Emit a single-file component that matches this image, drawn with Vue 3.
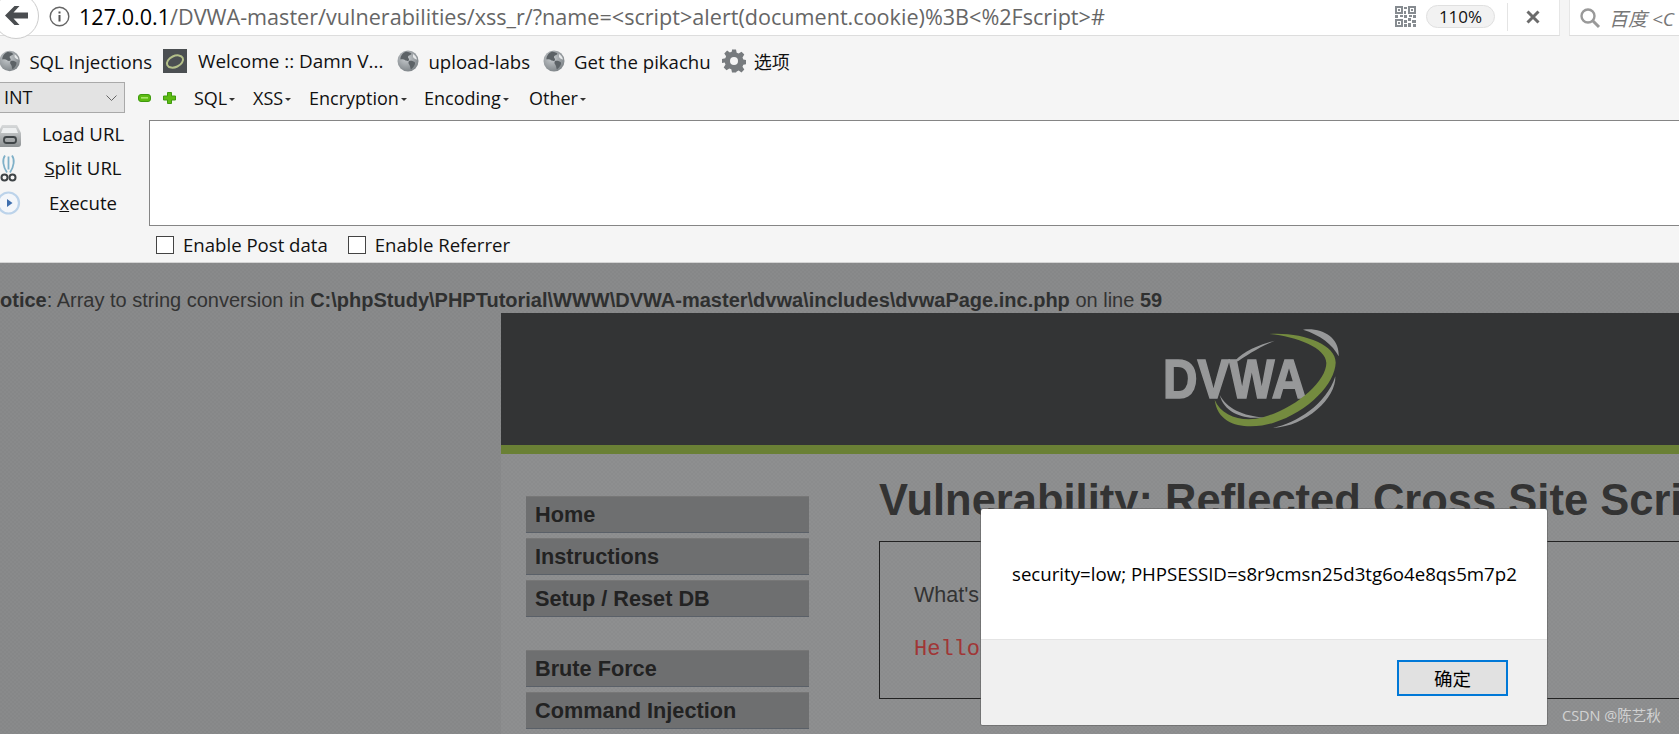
<template>
  <div class="screen">
    <svg class="defs" width="0" height="0">
      <defs>
        <radialGradient id="globeFill" cx="40%" cy="35%" r="70%">
          <stop offset="0" stop-color="#c9cdd0" />
          <stop offset="1" stop-color="#7c8286" />
        </radialGradient>
        <linearGradient id="drawerFill" x1="0" y1="0" x2="0" y2="1">
          <stop offset="0" stop-color="#d8dadb" />
          <stop offset="1" stop-color="#8d9193" />
        </linearGradient>
        <symbol id="globe" viewBox="0 0 22 22">
          <circle cx="11" cy="11" r="10.5" fill="url(#globeFill)" />
          <path d="M9 1.500c3 .5 5 1 5.500 2.500-1 1.500-3 1-3.500 2.500s1.500 2 1 3.500-3 1-4 0-3-1-4.500-.5C3 7 5 3 9 1.500z" fill="#5c6266" />
          <path d="M12 11c2-.5 4.500 0 6 1.500.5 2-1.500 5-4 7-1-1.500-.5-3-1.500-4.500S11 13 12 11z" fill="#5c6266" />
          <path d="M16 4c2 1 3.500 3 4 5.500-1.500 0-3-1-4-2.500z" fill="#e6e8e9" />
        </symbol>
      </defs>
    </svg>

    <div class="browser">
      <!-- address bar -->
      <div class="nav-row">
        <div class="url-box">
          <div class="back-btn">
            <svg width="23" height="21" viewBox="0 0 23 21"><path d="M0 10.500L9.500 1h5L8.500 7.500H23v6H8.500l6 6.500h-5z" fill="#4a4d50" /></svg>
          </div>
          <svg class="info-icon" width="21" height="21" viewBox="0 0 21 21">
            <circle cx="10.500" cy="10.500" r="9.300" fill="none" stroke="#666" stroke-width="1.400" />
            <rect x="9.500" y="9" width="2" height="6.500" fill="#555" />
            <rect x="9.500" y="5.500" width="2" height="2" fill="#555" />
          </svg>
          <div class="url-text"><span class="host">127.0.0.1</span>/DVWA-master/vulnerabilities/xss_r/?name=&lt;script&gt;alert(document.cookie)%3B&lt;%2Fscript&gt;#</div>
          <svg class="qr" width="21" height="21" viewBox="0 0 21 21">
            <path d="M0 0h8v8H0zM13 0h8v8h-8zM0 13h8v8H0z" fill="#868b90" />
            <path d="M2 2h4v4H2zM15 2h4v4h-4zM2 15h4v4H2z" fill="#fff" />
            <path d="M3 3h2v2H3zM16 3h2v2h-2zM3 16h2v2H3zM9 1h3v2H9zM9 5h2v3H9zM0 9h3v3H0zM5 9h3v2H5zM9 9h3v3H9zM14 9h3v2h-3zM18 9h3v3h-3zM9 14h3v3H9zM13 12h3v3h-3zM17 14h4v3h-4zM13 17h3v4h-3zM18 18h3v3h-3zM9 18h3v3H9z" fill="#868b90" />
          </svg>
          <div class="zoom-pill">110%</div>
          <div class="divider"></div>
          <svg class="close" width="14" height="14" viewBox="0 0 14 14"><path d="M1.500 1.500l11 11M12.500 1.500l-11 11" stroke="#6b6b6b" stroke-width="3" /></svg>
        </div>
        <div class="search-box">
          <svg class="search-icon" width="22" height="22" viewBox="0 0 22 22"><circle cx="9" cy="9" r="6.500" fill="none" stroke="#999" stroke-width="2.400" /><path d="M14 14l6 6" stroke="#999" stroke-width="3" /></svg>
          <span class="search-text">百度 &lt;C</span>
        </div>
      </div>

      <!-- bookmarks -->
      <div class="bookmarks">
        <div class="bm bm-sql">
          <svg class="bm-icon" width="22" height="22"><use href="#globe" /></svg>
          <span>SQL Injections</span>
        </div>
        <div class="bm bm-dvwa">
          <svg width="24" height="24" viewBox="0 0 24 24">
            <rect width="24" height="24" fill="#4b4f52" />
            <ellipse cx="12" cy="12.500" rx="8.500" ry="5.500" fill="none" stroke="#b4c08a" stroke-width="2" transform="rotate(-25 12 12.500)" />
          </svg>
          <span class="bm-long">Welcome :: Damn V...</span>
        </div>
        <div class="bm bm-upload">
          <svg class="bm-icon" width="22" height="22"><use href="#globe" /></svg>
          <span>upload-labs</span>
        </div>
        <div class="bm bm-pika">
          <svg class="bm-icon" width="22" height="22"><use href="#globe" /></svg>
          <span>Get the pikachu</span>
        </div>
        <div class="bm bm-opt">
          <svg width="24" height="24" viewBox="0 0 24 24">
            <path d="M10 1h4l.700 3.300 2 .800L19.500 3.300l2.800 2.800-1.800 2.800.800 2 3.200.700v4l-3.200.700-.800 2 1.800 2.800-2.800 2.800-2.800-1.800-2 .800L14 24h-4l-.700-3.300-2-.800-2.800 1.800-2.800-2.800 1.800-2.800-.800-2L0 14.400v-4l3.300-.700.800-2-1.800-2.800 2.800-2.800 2.800 1.800 2-.800z" fill="#777b7e" transform="translate(0 -.5)" />
            <circle cx="12" cy="12" r="4" fill="#f5f5f5" />
          </svg>
          <span class="cjk">选项</span>
        </div>
      </div>

      <!-- hackbar -->
      <div class="hack-menu">
        <div class="int-select">INT
          <svg width="11" height="6" viewBox="0 0 11 6"><path d="M.5.5l5 5 5-5" fill="none" stroke="#666" /></svg>
        </div>
        <svg class="pm minus" width="13" height="8" viewBox="0 0 13 8"><rect x=".5" y=".5" width="12" height="7" rx="2.500" fill="#5dbb12" stroke="#3f9a0e" /><rect x="3" y="3" width="7" height="1.600" fill="#a8e66a" /></svg>
        <svg class="pm plus" width="13" height="12" viewBox="0 0 13 12"><path d="M4.500.5h4V4h4v4h-4v3.500h-4V8h-4V4h4z" fill="#5dbb12" stroke="#3f9a0e" /></svg>
        <span class="hm" v-for="m in hackMenus" :key="m.label" :style="{ width: m.w + 'px' }">{{ m.label }}<i class="caret"></i></span>
      </div>

      <div class="hack-main">
        <div class="hack-actions">
          <div class="act">
            <svg class="ic-load" width="22" height="22" viewBox="0 0 22 22">
              <path d="M2 0h15l4 8v11a3 3 0 0 1-3 3H1a3 3 0 0 1-3-3V8z" fill="url(#drawerFill)" />
              <path d="M3 3h13l2 5H1z" fill="#eef0f1" />
              <rect x="4" y="12" width="12" height="6" rx="2.500" fill="none" stroke="#3f4447" stroke-width="1.800" />
            </svg>
            <span class="act-label">Lo<u>a</u>d URL</span>
          </div>
          <div class="act">
            <svg class="ic-split" width="15" height="27" viewBox="0 0 15 27">
              <path d="M4 0C1 4 2 11 6 17M11 0c3 4 2 11-2 17M7.500 1v13" fill="none" stroke="#7fb0c8" stroke-width="1.800" />
              <circle cx="3.500" cy="22" r="3" fill="none" stroke="#3e4346" stroke-width="2" />
              <circle cx="11.500" cy="22" r="3" fill="none" stroke="#3e4346" stroke-width="2" />
            </svg>
            <span class="act-label"><u>S</u>plit URL</span>
          </div>
          <div class="act">
            <svg class="ic-exec" width="22" height="24" viewBox="0 0 22 24">
              <circle cx="8.500" cy="12" r="10.500" fill="#f3f6fa" stroke="#bcd3ea" stroke-width="2.200" />
              <path d="M7 8l5.500 4L7 16z" fill="#3f6fae" />
            </svg>
            <span class="act-label">E<u>x</u>ecute</span>
          </div>
        </div>
        <div class="hack-field">
          <div class="url-area"></div>
          <div class="hack-checks">
            <label class="chk chk-post"><i class="box"></i>Enable Post data</label>
            <label class="chk"><i class="box"></i>Enable Referrer</label>
          </div>
        </div>
      </div>
    </div>

    <!-- dimmed page -->
    <div class="page">
      <div class="notice">otice<span class="n-reg">: Array to string conversion in </span>C:\phpStudy\PHPTutorial\WWW\DVWA-master\dvwa\includes\dvwaPage.inc.php<span class="n-reg"> on line </span>59</div>
      <div class="dvwa">
        <div class="dvwa-header">
          <svg class="logo" width="176" height="101" viewBox="0 0 528 303">
            <text x="0" y="210" textLength="430" lengthAdjust="spacingAndGlyphs" class="logo-text">DVWA</text>
            <path d="M320 18C420 12 520 50 518 105C516 165 440 250 330 285C260 305 165 300 155 215C175 265 240 285 300 268C400 240 490 160 490 105C490 60 400 25 320 18Z" fill="#748b3f" />
            <path d="M420 5C480-2 530 30 527 85C510 50 470 20 420 5Z" fill="#979899" />
            <path d="M517 145C520 210 430 295 330 300C400 285 490 230 517 145Z" fill="#979899" />
            <path d="M335 38C290 50 240 70 215 100L225 100C260 75 300 52 335 38Z" fill="#979899" />
            <path d="M170 200C190 240 240 265 305 268C250 275 185 260 170 200Z" fill="#979899" />
          </svg>
        </div>
        <div class="dvwa-body">
          <div class="menu">
            <div v-for="item in menu" :key="item.label" class="menu-item" :class="{ 'menu-gap': item.gap }">{{ item.label }}</div>
          </div>
          <div class="main">
            <h1 class="title">Vulnerability: Reflected Cross Site Scripting (XSS)</h1>
            <div class="vuln-box">
              <p class="whats">What's your name?</p>
              <pre class="hello">Hello</pre>
            </div>
          </div>
        </div>
      </div>
    </div>

    <!-- alert -->
    <div class="alert">
      <div class="alert-msg">security=low; PHPSESSID=s8r9cmsn25d3tg6o4e8qs5m7p2</div>
      <div class="alert-foot"><button class="alert-btn">确定</button></div>
    </div>
    <div class="watermark">CSDN @陈艺秋</div>
  </div>
</template>

<script setup>
const hackMenus = [
  { label: 'SQL', w: 59 },
  { label: 'XSS', w: 56 },
  { label: 'Encryption', w: 115 },
  { label: 'Encoding', w: 105 },
  { label: 'Other', w: 70 }
]

const menu = [
  { label: 'Home' },
  { label: 'Instructions' },
  { label: 'Setup / Reset DB' },
  { label: 'Brute Force', gap: true },
  { label: 'Command Injection' }
]
</script>

<style>
html, body { margin: 0; background: #898a8b; }
</style>

<style scoped>
.screen {
  position: relative;
  width: 1679px;
  height: 734px;
  overflow: hidden;
  font-family: "Open Sans", "Noto Sans CJK SC", sans-serif;
  color: #111;
}
.defs { position: absolute; }

.browser { background: #f5f5f5; height: 262px; }

.nav-row { display: flex; height: 36px; }
.url-box {
  position: relative;
  display: flex;
  align-items: center;
  width: 1559px;
  padding-bottom: 2px;
  height: 33px;
  background: #fff;
  border-right: 1px solid #e6e6e6;
  border-bottom: 1px solid #ddd;
}
.back-btn {
  position: absolute;
  left: -7px;
  top: -7px;
  z-index: 1;
  width: 46px;
  height: 46px;
  box-sizing: border-box;
  border: 1px solid #ccc;
  border-radius: 50%;
  background: #fff;
  display: flex;
  align-items: center;
  justify-content: center;
  padding-bottom: 2px;
}
.info-icon { margin-left: 49px; flex: none; }
.url-text {
  margin-left: 9px;
  font-size: 21.6px;
  line-height: 28px;
  color: #666;
  white-space: nowrap;
  flex: 1;
}
.host { color: #000; }
.qr { flex: none; margin-right: 10px; }
.zoom-pill {
  width: 69px;
  height: 23px;
  box-sizing: border-box;
  border: 1px solid #e0e0e0;
  border-radius: 12px;
  background: #f2f2f2;
  font-size: 17px;
  line-height: 21px;
  text-align: center;
  color: #111;
}
.divider { width: 1px; height: 28px; background: #e4e4e4; margin-left: 12px; }
.close { margin: 0 19px 0 18px; flex: none; }
.search-box {
  margin-left: 9px;
  flex: 1;
  height: 35px;
  background: #fff;
  border-left: 1px solid #e6e6e6;
  border-bottom: 1px solid #ddd;
  display: flex;
  align-items: center;
  gap: 8px;
  padding-left: 9px;
  overflow: hidden;
}
.search-icon { flex: none; }
.search-text { font-size: 19px; font-style: italic; color: #777; white-space: nowrap; }

.bookmarks {
  display: flex;
  align-items: center;
  height: 46px;
  box-sizing: border-box;
  padding-top: 4px;
  font-size: 18.6px;
  white-space: nowrap;
}
.bm { display: flex; align-items: center; flex: none; }
.bm-sql { width: 152px; }
.bm-icon { margin-right: 9px; margin-left: -1px; }
.bm-dvwa { margin-left: 11px; gap: 11px; }
.bm-long { font-size: 18.9px; }
.bm-upload { margin-left: 15px; }
.bm-pika { margin-left: 14px; }
.bm-opt { margin-left: 11px; gap: 8px; }
.cjk { font-family: "Noto Sans CJK SC", sans-serif; font-size: 18px; }

.hack-menu { display: flex; align-items: center; height: 31px; font-size: 18px; }
.int-select {
  width: 125px;
  height: 31px;
  box-sizing: border-box;
  border: 1px solid #a9a9a9;
  border-left: 0;
  background: #e3e3e3;
  padding: 0 7px 0 4px;
  line-height: 27px;
  display: flex;
  align-items: center;
  justify-content: space-between;
}
.pm { flex: none; }
.minus { margin-left: 13px; }
.plus { margin-left: 12px; margin-right: 18px; }
.hm { flex: none; white-space: nowrap; }
.caret {
  display: inline-block;
  margin-left: 2px;
  vertical-align: middle;
  border: 3px solid transparent;
  border-top: 3px solid #333;
  border-bottom: 0;
}

.hack-main { display: flex; margin-top: 3px; }
.hack-actions { width: 149px; flex: none; font-size: 18.6px; }
.act { position: relative; height: 34.5px; display: flex; align-items: center; }
.act svg { position: absolute; top: 50%; transform: translateY(-50%); overflow: visible; }
.ic-load { left: 0; margin-top: 3px; }
.ic-split { left: 1px; margin-top: 1px; }
.ic-exec { left: 0; margin-top: 1px; }
.act-label { flex: 1; text-align: center; padding-left: 17px; }
.hack-field { flex: 1; margin-right: -3px; padding-top: 4px; }
.url-area {
  height: 106px;
  box-sizing: border-box;
  border: 1px solid #858585;
  background: #fff;
}
.hack-checks { display: flex; align-items: center; height: 37px; padding-left: 7px; font-size: 18.6px; }
.chk { display: flex; align-items: center; }
.chk-post { margin-right: 20px; }
.box {
  width: 18px;
  height: 18px;
  box-sizing: border-box;
  border: 1px solid #444;
  background: #fff;
  margin-right: 9px;
}

.page {
  height: 472px;
  box-sizing: border-box;
  border-top: 1px solid #d4d4d4;
  background-color: #898a8b;
  background-image: repeating-conic-gradient(rgba(0, 0, 0, 0.025) 0 25%, transparent 0 50%);
  background-size: 4px 4px;
  font-family: "Liberation Sans", Arial, sans-serif;
}
.notice {
  height: 50px;
  box-sizing: border-box;
  padding-top: 26px;
  font-size: 20px;
  line-height: 22px;
  font-weight: 700;
  white-space: nowrap;
  color: #2f3030;
}
.n-reg { font-weight: 400; color: #333; }

.dvwa {
  margin-left: 501px;
  background-color: #8e8f90;
  background-image: repeating-conic-gradient(rgba(0, 0, 0, 0.025) 0 25%, transparent 0 50%);
  background-size: 4px 4px;
  height: 421px;
}
.dvwa-header {
  box-sizing: border-box;
  padding: 15px 0 0 662px;
  background: #333435;
  border-bottom: 9px solid #6a8035;
  height: 141px;
}
.logo { display: block; filter: blur(0.6px); }
.logo-text {
  font: 700 168px "Liberation Sans", Arial, sans-serif;
  fill: #979899;
  stroke: #979899;
  stroke-width: 5px;
}
.dvwa-body { display: flex; padding: 42px 0 0 25px; }
.menu { width: 283px; flex: none; }
.menu-item {
  height: 37px;
  box-sizing: border-box;
  margin-bottom: 5px;
  padding-left: 9px;
  background: #6e6f70;
  border-top: 1px solid #777;
  border-bottom: 1px solid #5a6068;
  font-size: 21.7px;
  line-height: 36px;
  font-weight: 700;
  color: #222;
  white-space: nowrap;
}
.menu-gap { margin-top: 33px; }
.main { margin-left: 70px; flex: 1; min-width: 0; margin-right: -3px; }
.title {
  margin: -21px 0 0;
  font-size: 43.5px;
  line-height: 50px;
  font-weight: 700;
  color: #333;
  white-space: nowrap;
}
.vuln-box {
  margin-top: 16px;
  height: 158px;
  box-sizing: border-box;
  border: 1px solid #222;
  padding: 41px 0 0 34px;
}
.whats { margin: 0; font-size: 21.5px; line-height: 24px; color: #333; }
.hello {
  margin: 31px 0 0;
  font-family: "Liberation Mono", "Courier New", monospace;
  font-size: 22px;
  line-height: 24px;
  color: #a03636;
}

.alert {
  position: absolute;
  left: 981px;
  top: 509px;
  width: 566px;
  height: 216px;
  border-radius: 2px;
  background: #fff;
  box-shadow: 0 0 0 1px rgba(90, 90, 90, 0.5);
  overflow: hidden;
  display: flex;
  flex-direction: column;
  font-family: "Open Sans", "Noto Sans CJK SC", sans-serif;
}
.alert-msg {
  height: 130px;
  box-sizing: border-box;
  padding: 52px 0 0 31px;
  font-size: 18.66px;
  line-height: 26px;
  color: #000;
  white-space: nowrap;
}
.alert-foot {
  flex: 1;
  background: #f0f0f0;
  border-top: 1px solid #e4e4e4;
  display: flex;
  justify-content: flex-end;
  align-items: flex-start;
  padding: 20px 39px 0 0;
}
.alert-btn {
  width: 111px;
  height: 36px;
  box-sizing: border-box;
  background: #e1e1e1;
  border: 2px solid #0078d7;
  font: 18.5px "Noto Sans CJK SC", sans-serif;
  color: #000;
  padding: 0;
}
.watermark {
  position: absolute;
  left: 1562px;
  top: 706px;
  font: 14.5px/20px "Open Sans", "Noto Sans CJK SC", sans-serif;
  color: rgba(255, 255, 255, 0.62);
  white-space: nowrap;
}
</style>
